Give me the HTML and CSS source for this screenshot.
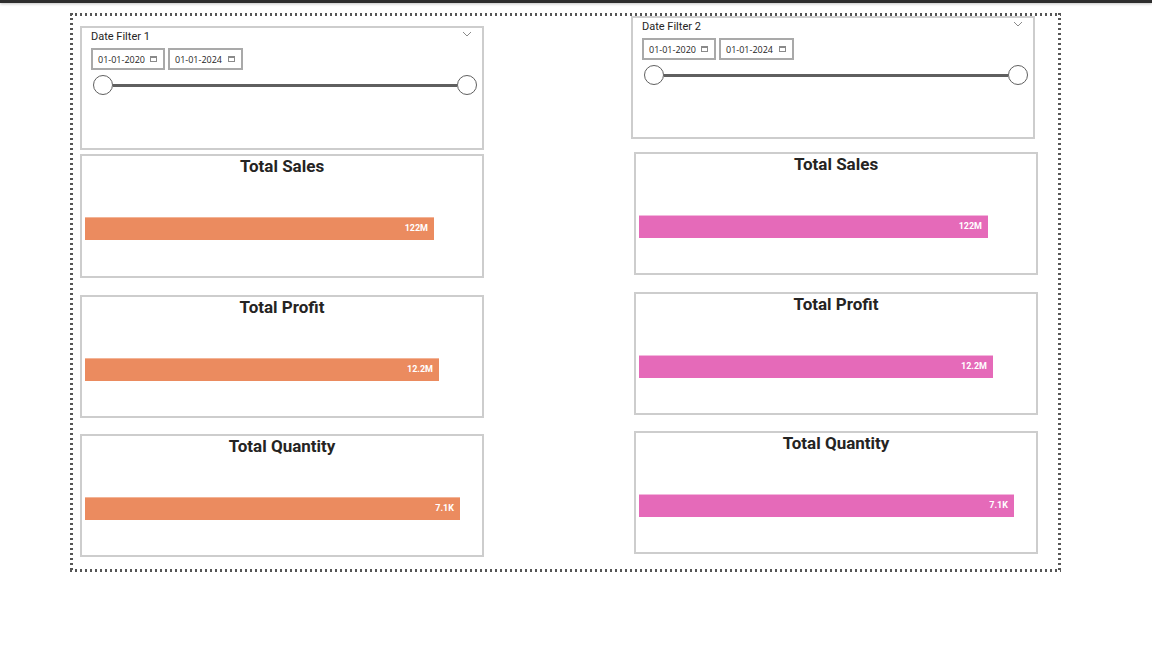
FILE: index.html
```html
<!DOCTYPE html>
<html>
<head>
<meta charset="utf-8">
<link rel="stylesheet" href="styles.css">
</head>
<body>
<div class="topbar"></div>
<div class="frame">
  <div class="col col-left">
    <div class="filter">
      <div class="filter-head">
        <span class="filter-title">Date Filter 1</span>
        <svg class="chev" width="10" height="6" viewBox="0 0 10 6"><polyline points="1,1 5,5 9,1" fill="none" stroke="#8a8a8a" stroke-width="1"/></svg>
      </div>
      <div class="dates">
        <div class="date"><span>01-01-2020</span><svg class="cal" width="7" height="6" viewBox="0 0 7 6"><rect x="0.5" y="0.5" width="6" height="5" fill="none" stroke="#8a8a8a" stroke-width="1"/><rect x="0.5" y="0.5" width="6" height="1.5" fill="#8a8a8a"/></svg></div>
        <div class="date date-2"><span>01-01-2024</span><svg class="cal" width="7" height="6" viewBox="0 0 7 6"><rect x="0.5" y="0.5" width="6" height="5" fill="none" stroke="#8a8a8a" stroke-width="1"/><rect x="0.5" y="0.5" width="6" height="1.5" fill="#8a8a8a"/></svg></div>
      </div>
      <div class="slider"><span class="knob"></span><span class="track"></span><span class="knob"></span></div>
    </div>
    <div class="card card-1">
      <div class="card-title">Total Sales</div>
      <div class="bar-area"><div class="bar bar-orange" style="width:349px">122M</div></div>
    </div>
    <div class="card card-n">
      <div class="card-title">Total Profit</div>
      <div class="bar-area"><div class="bar bar-orange" style="width:354px">12.2M</div></div>
    </div>
    <div class="card card-n card-last">
      <div class="card-title">Total Quantity</div>
      <div class="bar-area"><div class="bar bar-orange" style="width:375px">7.1K</div></div>
    </div>
  </div>
  <div class="col col-right">
    <div class="filter">
      <div class="filter-head">
        <span class="filter-title">Date Filter 2</span>
        <svg class="chev" width="10" height="6" viewBox="0 0 10 6"><polyline points="1,1 5,5 9,1" fill="none" stroke="#8a8a8a" stroke-width="1"/></svg>
      </div>
      <div class="dates">
        <div class="date"><span>01-01-2020</span><svg class="cal" width="7" height="6" viewBox="0 0 7 6"><rect x="0.5" y="0.5" width="6" height="5" fill="none" stroke="#8a8a8a" stroke-width="1"/><rect x="0.5" y="0.5" width="6" height="1.5" fill="#8a8a8a"/></svg></div>
        <div class="date date-2"><span>01-01-2024</span><svg class="cal" width="7" height="6" viewBox="0 0 7 6"><rect x="0.5" y="0.5" width="6" height="5" fill="none" stroke="#8a8a8a" stroke-width="1"/><rect x="0.5" y="0.5" width="6" height="1.5" fill="#8a8a8a"/></svg></div>
      </div>
      <div class="slider"><span class="knob"></span><span class="track"></span><span class="knob"></span></div>
    </div>
    <div class="card card-1">
      <div class="card-title">Total Sales</div>
      <div class="bar-area"><div class="bar bar-pink" style="width:349px">122M</div></div>
    </div>
    <div class="card card-n">
      <div class="card-title">Total Profit</div>
      <div class="bar-area"><div class="bar bar-pink" style="width:354px">12.2M</div></div>
    </div>
    <div class="card card-n card-last">
      <div class="card-title">Total Quantity</div>
      <div class="bar-area"><div class="bar bar-pink" style="width:375px">7.1K</div></div>
    </div>
  </div>
</div>
</body>
</html>
```

FILE: styles.css
```css
* { box-sizing: border-box; }
html, body { margin: 0; padding: 0; background: #fff; }
body { font-family: "Open Sans", "Liberation Sans", sans-serif; color: #252423; }

.topbar {
  height: 3px;
  background: #2e2e2e;
  box-shadow: 0 1px 3px rgba(0,0,0,0.25);
}

.frame {
  margin: 10px 0 0 70px;
  width: 991px;
  height: 559px;
  display: grid;
  grid-template-columns: 404px 407px;
  column-gap: 147px;
  padding-left: 10px;
  align-items: start;
  background:
    repeating-linear-gradient(90deg, #555 0 2px, transparent 2px 5px) left top / 100% 3px no-repeat,
    repeating-linear-gradient(90deg, #555 0 2px, transparent 2px 5px) left bottom / 100% 3px no-repeat,
    repeating-linear-gradient(180deg, #555 0 2px, transparent 2px 5px) left top / 3px 100% no-repeat,
    repeating-linear-gradient(180deg, #555 0 2px, transparent 2px 5px) right top / 3px 100% no-repeat;
}

.col { display: flex; flex-direction: column; }
.col-left { padding-top: 13px; }
.col-right { padding-top: 3px; }

.filter {
  width: 404px;
  height: 124px;
  border: 2px solid #cdcdcd;
  padding: 2px 10px 0 9px;
}
.col-right .filter { height: 123px; }

.filter-head {
  display: flex;
  justify-content: space-between;
  align-items: center;
  height: 14px;
}
.filter-title {
  font-family: Roboto, "Open Sans", sans-serif;
  font-size: 11px;
  line-height: 14px;
  color: #252423;
}
.chev { margin-top: -6px; }

.dates {
  display: flex;
  gap: 3px;
  margin-top: 4px;
}
.date {
  width: 74px;
  height: 22px;
  border: 2px solid #a9a9a9;
  display: flex;
  align-items: center;
  justify-content: space-between;
  padding: 0 6px 0 5px;
  font-family: "Open Sans", "Liberation Sans", sans-serif;
  font-size: 9px;
  color: #252423;
}
.date-2 { width: 75px; }
.cal { display: block; margin-top: -1px; }

.slider {
  display: flex;
  align-items: center;
  width: 384px;
  margin: 5px 0 0 2px;
}
.knob {
  width: 20px;
  height: 20px;
  border: 1.5px solid #5f5f5f;
  border-radius: 50%;
  background: #fff;
  flex: none;
}
.track {
  flex: 1;
  height: 3px;
  background: #5f5f5f;
}

.card {
  width: 404px;
  height: 124px;
  border: 2px solid #cdcdcd;
  margin-top: 4px;
}
.col-right .card { margin-left: 3px; height: 123px; margin-top: 13px; }
.card-n { margin-top: 17px; height: 123px; }
.col-right .card-n { margin-top: 17px; }
.card-last { margin-top: 16px; }
.col-right .card-last { margin-top: 16px; }

.card-title {
  font-family: Roboto, "Open Sans", sans-serif;
  font-weight: 700;
  font-size: 17px;
  line-height: 20px;
  text-align: center;
  color: #252423;
}

.bar-area {
  margin-top: 41px;
  padding-left: 3px;
}
.bar {
  height: 23px;
  line-height: 23px;
  text-align: right;
  padding-right: 6px;
  font-family: Roboto, "Liberation Sans", sans-serif;
  font-weight: 700;
  font-size: 9px;
  color: #fff;
}
.bar-orange { background: #eb8b5f; box-shadow: inset 0 1px 0 #f3b497; }
.bar-pink { background: #e56ab9; box-shadow: inset 0 1px 0 #f3b7dd; }
```
